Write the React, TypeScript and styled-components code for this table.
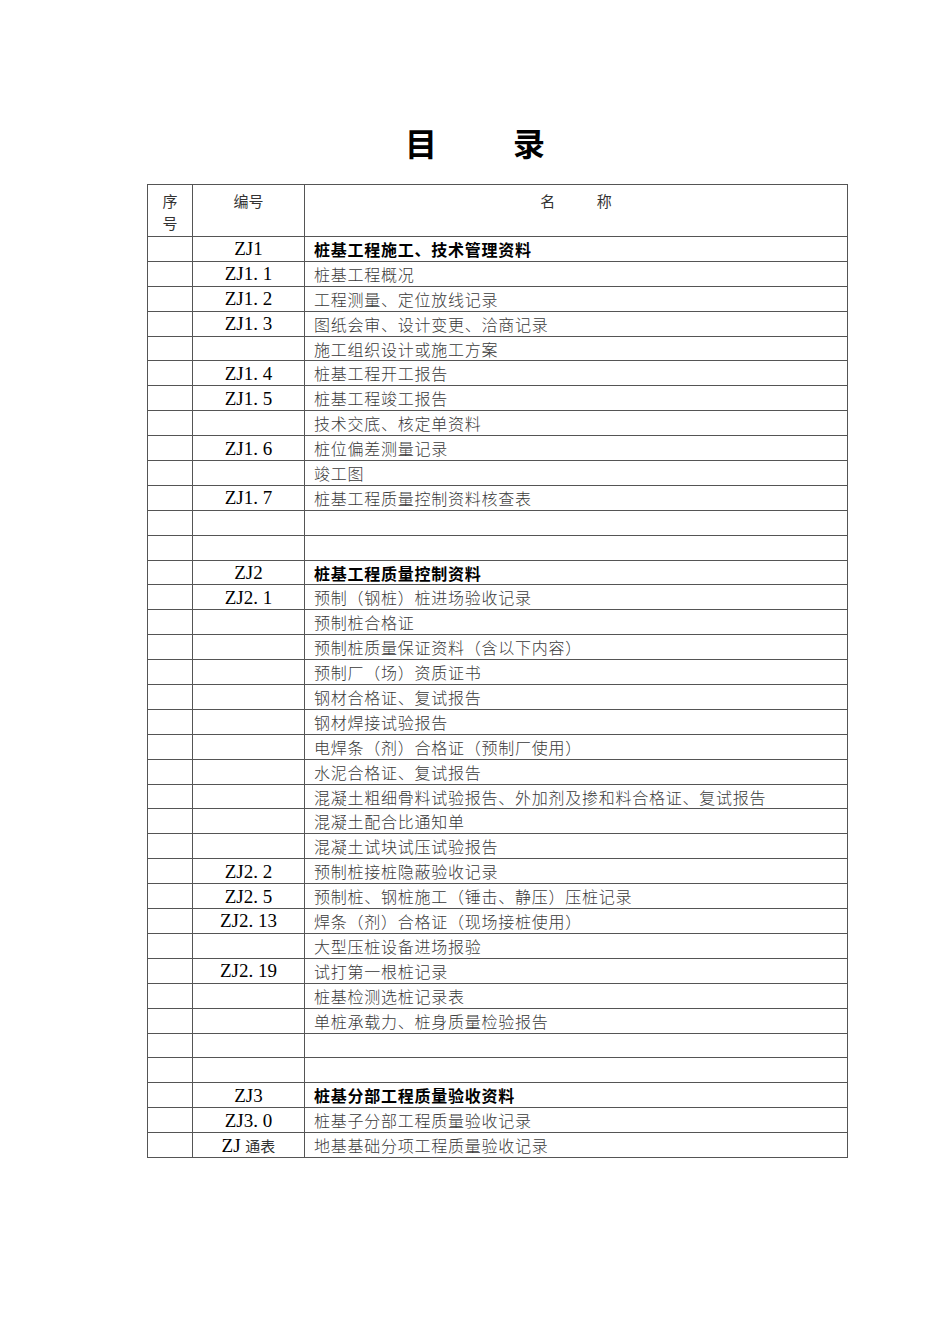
import React from 'react';
import styled, { createGlobalStyle } from 'styled-components';

type Row = {
    code?: string;
    name?: string;
    bold?: boolean;
};

const rows: Row[] = [
    { code: 'ZJ1', name: '桩基工程施工、技术管理资料', bold: true },
    { code: 'ZJ1. 1', name: '桩基工程概况' },
    { code: 'ZJ1. 2', name: '工程测量、定位放线记录' },
    { code: 'ZJ1. 3', name: '图纸会审、设计变更、洽商记录' },
    { name: '施工组织设计或施工方案' },
    { code: 'ZJ1. 4', name: '桩基工程开工报告' },
    { code: 'ZJ1. 5', name: '桩基工程竣工报告' },
    { name: '技术交底、核定单资料' },
    { code: 'ZJ1. 6', name: '桩位偏差测量记录' },
    { name: '竣工图' },
    { code: 'ZJ1. 7', name: '桩基工程质量控制资料核查表' },
    {},
    {},
    { code: 'ZJ2', name: '桩基工程质量控制资料', bold: true },
    { code: 'ZJ2. 1', name: '预制（钢桩）桩进场验收记录' },
    { name: '预制桩合格证' },
    { name: '预制桩质量保证资料（含以下内容）' },
    { name: '预制厂（场）资质证书' },
    { name: '钢材合格证、复试报告' },
    { name: '钢材焊接试验报告' },
    { name: '电焊条（剂）合格证（预制厂使用）' },
    { name: '水泥合格证、复试报告' },
    { name: '混凝土粗细骨料试验报告、外加剂及掺和料合格证、复试报告' },
    { name: '混凝土配合比通知单' },
    { name: '混凝土试块试压试验报告' },
    { code: 'ZJ2. 2', name: '预制桩接桩隐蔽验收记录' },
    { code: 'ZJ2. 5', name: '预制桩、钢桩施工（锤击、静压）压桩记录' },
    { code: 'ZJ2. 13', name: '焊条（剂）合格证（现场接桩使用）' },
    { name: '大型压桩设备进场报验' },
    { code: 'ZJ2. 19', name: '试打第一根桩记录' },
    { name: '桩基检测选桩记录表' },
    { name: '单桩承载力、桩身质量检验报告' },
    {},
    {},
    { code: 'ZJ3', name: '桩基分部工程质量验收资料', bold: true },
    { code: 'ZJ3. 0', name: '桩基子分部工程质量验收记录' },
    { code: 'ZJ 通表', name: '地基基础分项工程质量验收记录' },
];

const GlobalStyle = createGlobalStyle`
    html, body {
        margin: 0;
        padding: 0;
        background: #fff;
    }
    body {
        font-family: "Noto Sans CJK SC", "Liberation Sans", sans-serif;
        color: #222;
    }
`;

const Page = styled.div`
    width: 950px;
    height: 1344px;
    box-sizing: border-box;
    padding: 122px 0 0 147px;
`;

const Title = styled.h1`
    display: flex;
    justify-content: center;
    gap: 76px;
    width: 656px;
    margin: 0 0 22px;
    font-size: 32px;
    font-weight: 700;
    line-height: 40px;
    color: #000;
`;

const Table = styled.table`
    width: 700px;
    border-collapse: collapse;
    table-layout: fixed;
    border: 1px solid #555;
`;

const HeadCell = styled.th<{ $spread?: boolean }>`
    height: 46px;
    padding: 5px 0 0;
    border: 1px solid #555;
    vertical-align: top;
    font-size: 15px;
    font-weight: 400;
    line-height: 22px;
    color: #333;
    text-align: center;
    word-spacing: ${(p) => (p.$spread ? '38px' : '0')};
`;

const CodeCell = styled.td`
    height: 22.9px;
    padding: 1px 0 0;
    border: 1px solid #555;
    text-align: center;
    font-family: "Liberation Serif", "Noto Sans CJK SC", serif;
    font-size: 19px;
    line-height: 20px;
    color: #000;
    white-space: pre;

    & .cjk {
        font-family: "Noto Sans CJK SC", sans-serif;
        font-size: 15px;
        color: #333;
    }
`;

const IndexCell = styled.td`
    height: 23.9px;
    padding: 0;
    border: 1px solid #555;
`;

const NameCell = styled.td<{ $bold?: boolean }>`
    height: 23.9px;
    padding: 0 0 0 9px;
    border: 1px solid #555;
    font-size: 16px;
    line-height: 20px;
    letter-spacing: 0.75px;
    white-space: nowrap;
    font-weight: ${(p) => (p.$bold ? 700 : 300)};
    color: ${(p) => (p.$bold ? '#000' : '#3a3a3a')};
`;

function renderCode(code?: string) {
    if (!code) return null;
    const parts = code.split(' ');
    if (parts.length === 1 || code.includes('.')) return code;
    return (
        <>
            {parts[0]} <span className="cjk">{parts[1]}</span>
        </>
    );
}

export default function App() {
    return (
        <Page>
            <GlobalStyle />
            <Title>
                <span>目</span>
                <span>录</span>
            </Title>
            <Table>
                <colgroup>
                    <col style={{ width: 45 }} />
                    <col style={{ width: 112 }} />
                    <col style={{ width: 543 }} />
                </colgroup>
                <thead>
                    <tr>
                        <HeadCell>序<br />号</HeadCell>
                        <HeadCell>编号</HeadCell>
                        <HeadCell $spread>名 称</HeadCell>
                    </tr>
                </thead>
                <tbody>
                    {rows.map((row, i) => (
                        <tr key={i}>
                            <IndexCell />
                            <CodeCell>{renderCode(row.code)}</CodeCell>
                            <NameCell $bold={row.bold}>{row.name}</NameCell>
                        </tr>
                    ))}
                </tbody>
            </Table>
        </Page>
    );
}
